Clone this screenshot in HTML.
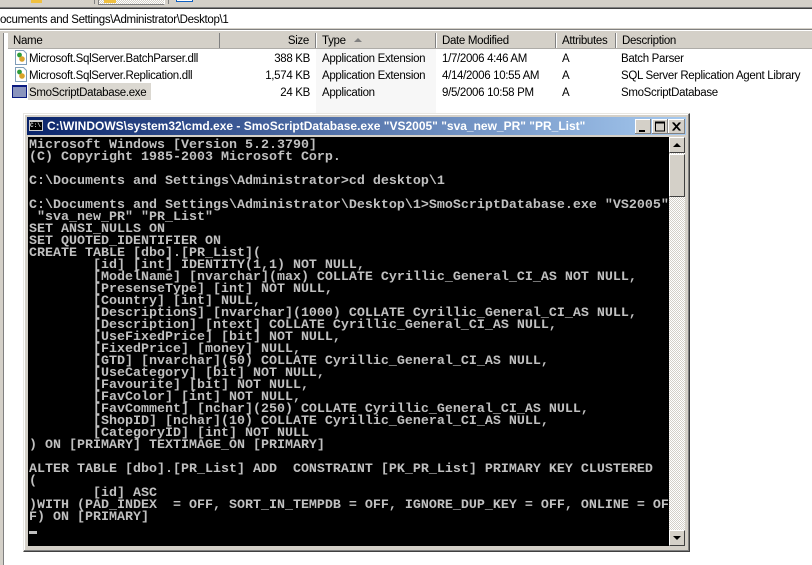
<!DOCTYPE html>
<html><head><meta charset="utf-8"><style>
html,body{margin:0;padding:0;background:#fff}
#r{position:relative;width:812px;height:565px;overflow:hidden;background:#fff;font-family:"Liberation Sans",sans-serif;font-size:11.5px;letter-spacing:-.32px;color:#000}
.a{position:absolute}
.t{position:absolute;white-space:pre;line-height:14px;height:14px}
.h{position:absolute;top:33px;height:15px;background:#d4d0c8;border-right:1px solid #808080;box-shadow:inset -1px 0 0 #d4d0c8,1px 0 0 #fff;line-height:17px;box-sizing:border-box;padding-left:5px;white-space:pre}
pre{position:absolute;left:29px;top:137px;padding-top:3px;margin:0;font:bold 13.33px/12px "Liberation Mono",monospace;letter-spacing:0;color:#c0c0c0;tab-size:8;width:640px;height:405px;overflow:hidden}
</style></head><body><div id="r">
<div class="a" style="left:0;top:0;width:812px;height:7px;background:#d4d0c8"></div>
<div class="a" style="left:31px;top:0;width:11px;height:3px;background:#f0c040"></div>
<div class="a" style="left:94px;top:0;width:1px;height:4px;background:#808080"></div>
<div class="a" style="left:98px;top:0;width:67px;height:5px;background:repeating-conic-gradient(#fff 0 25%,#d4d0c8 0 50%) 0 0/2px 2px;border-right:1px solid #fff;border-bottom:1px solid #808080;border-left:1px solid #808080;box-sizing:border-box"></div>
<div class="a" style="left:104px;top:0;width:12px;height:3px;background:#f0c040"></div>
<div class="a" style="left:168px;top:0;width:1px;height:4px;background:#808080"></div>
<div class="a" style="left:176px;top:0;width:15px;height:1px;background:#fff;border:1px solid #1060c0;border-top:0;box-sizing:content-box"></div>
<div class="a" style="left:0;top:7px;width:812px;height:1px;background:#808080"></div>
<div class="a" style="left:0;top:8px;width:812px;height:1px;background:#404040"></div>
<div class="a" style="left:0;top:28px;width:812px;height:1px;background:#d4d0c8"></div>
<div class="a" style="left:0;top:29px;width:812px;height:1px;background:#808080"></div>
<div class="a" style="left:0;top:30px;width:812px;height:1px;background:#fff"></div>
<div class="a" style="left:0;top:31px;width:812px;height:2px;background:#d4d0c8"></div>
<div class="t" style="left:-8px;top:13px">Documents and Settings\Administrator\Desktop\1</div>
<div class="a" style="left:0;top:33px;width:3px;height:532px;background:#d4d0c8"></div>
<div class="a" style="left:3px;top:33px;width:5px;height:532px;background:#fff;border-left:1px solid #808080;box-sizing:border-box"></div>

<div class="a" style="left:8px;top:33px;width:804px;height:16px;background:#d4d0c8"></div>
<div class="h" style="left:9px;width:211px;padding-left:4px">Name</div>
<div class="h" style="left:220px;width:96px;text-align:right;padding:0 6px 0 0">Size</div>
<div class="h" style="left:317px;width:119px">Type</div>
<div class="a" style="left:354px;top:38px;width:0;height:0;border:4px solid transparent;border-top:0;border-bottom:4px solid #808080"></div>
<div class="h" style="left:437px;width:119px">Date Modified</div>
<div class="h" style="left:557px;width:59px">Attributes</div>
<div class="h" style="left:617px;width:195px;border-right:0">Description</div>
<div class="a" style="left:8px;top:48px;width:804px;height:1px;background:#808080;opacity:.45"></div>

<div class="a" style="left:316px;top:49px;width:120px;height:65px;background:#f7f7f7"></div>

<svg class="a" style="left:14px;top:50px" width="14" height="32" viewBox="0 0 14 32">
<path d="M1.5.5h8l3 3v11h-11z" fill="#fff" stroke="#7f9db9"/><circle cx="5.5" cy="5" r="2.4" fill="#2f9d3a"/><circle cx="8" cy="9" r="2.8" fill="#d9a32a"/>
<path d="M1.5 17.5h8l3 3v11h-11z" fill="#fff" stroke="#7f9db9"/><circle cx="5.5" cy="22" r="2.4" fill="#2f9d3a"/><circle cx="8" cy="26" r="2.8" fill="#d9a32a"/>
</svg>
<div class="a" style="left:12px;top:85px;width:15px;height:13px;background:#8a94bd;border:1px solid #0a1a80;box-sizing:border-box;box-shadow:inset 0 1px 0 #0a1a80"></div>
<div class="a" style="left:28px;top:83px;width:123px;height:17px;background:#dbd8d1"></div>

<div class="t" style="left:29px;top:52px">Microsoft.SqlServer.BatchParser.dll</div>
<div class="t" style="left:29px;top:69px">Microsoft.SqlServer.Replication.dll</div>
<div class="t" style="left:29px;top:86px">SmoScriptDatabase.exe</div>
<div class="t" style="left:210px;width:100px;text-align:right;top:52px">388 KB</div>
<div class="t" style="left:210px;width:100px;text-align:right;top:69px">1,574 KB</div>
<div class="t" style="left:210px;width:100px;text-align:right;top:86px">24 KB</div>
<div class="t" style="left:322px;top:52px">Application Extension</div>
<div class="t" style="left:322px;top:69px">Application Extension</div>
<div class="t" style="left:322px;top:86px">Application</div>
<div class="t" style="left:442px;top:52px">1/7/2006 4:46 AM</div>
<div class="t" style="left:442px;top:69px">4/14/2006 10:55 AM</div>
<div class="t" style="left:442px;top:86px">9/5/2006 10:58 PM</div>
<div class="t" style="left:562px;top:52px">A</div>
<div class="t" style="left:562px;top:69px">A</div>
<div class="t" style="left:562px;top:86px">A</div>
<div class="t" style="left:621px;top:52px">Batch Parser</div>
<div class="t" style="left:621px;top:69px">SQL Server Replication Agent Library</div>
<div class="t" style="left:621px;top:86px">SmoScriptDatabase</div>

<div class="a" style="left:23px;top:113px;width:667px;height:439px;background:#d4d0c8;border:1px solid;border-color:#e8e6e1 #404040 #404040 #e8e6e1;box-sizing:border-box;box-shadow:inset -1px -1px 0 #808080,inset 1px 1px 0 #fff"></div>
<div class="a" style="left:27px;top:117px;width:659px;height:18px;background:linear-gradient(90deg,#0a246a,#a6caf0)"></div>
<div class="a" style="left:29px;top:120px;width:14px;height:11px;background:#000;border:1px solid #ccc;border-top-width:2px;box-sizing:border-box;overflow:hidden;color:#ddd;font:bold 6px/8px 'Liberation Mono',monospace;letter-spacing:0">C:\</div>
<div class="t" style="left:47px;top:118px;font:bold 12px/16px 'Liberation Sans',sans-serif;letter-spacing:0;height:16px;color:#fff">C:\WINDOWS\system32\cmd.exe - SmoScriptDatabase.exe "VS2005" "sva_new_PR" "PR_List"</div>
<svg class="a" style="left:635px;top:119px" width="50" height="15" viewBox="0 0 50 15">
<g fill="#d4d0c8" stroke="#808080"><rect x=".5" y=".5" width="15" height="14"/><rect x="17.5" y=".5" width="15" height="14"/><rect x="33.5" y=".5" width="16" height="14"/></g>
<path d="M.5 14V.5H15M17.5 14V.5H32M33.5 14V.5H49" fill="none" stroke="#fff"/>
<path d="M4 11h6v2H4z"/><path d="M20 2.5h10v10h-10zM21 4.5h8v7h-8z" fill-rule="evenodd"/>
<path d="M37.5 3.5l7 8M38.5 3.5l7 8M44.5 3.5l-7 8M45.5 3.5l-7 8" stroke="#000" fill="none"/>
</svg>
<div class="a" style="left:28px;top:137px;width:641px;height:409px;background:#000"></div>
<div class="a" style="left:669px;top:137px;width:16px;height:409px;background:repeating-conic-gradient(#fff 0 25%,#d4d0c8 0 50%) 0 0/2px 2px"></div>
<div class="a" style="left:669px;top:137px;width:16px;height:16px;background:#d4d0c8;box-sizing:border-box;border:1px solid;border-color:#fff #404040 #404040 #fff"></div>
<div class="a" style="left:673px;top:143px;width:0;height:0;border:4px solid transparent;border-top:0;border-bottom:4px solid #000"></div>
<div class="a" style="left:669px;top:154px;width:16px;height:43px;background:#d4d0c8;box-sizing:border-box;border:1px solid;border-color:#fff #404040 #404040 #fff"></div>
<div class="a" style="left:669px;top:530px;width:16px;height:16px;background:#d4d0c8;box-sizing:border-box;border:1px solid;border-color:#fff #404040 #404040 #fff"></div>
<div class="a" style="left:673px;top:536px;width:0;height:0;border:4px solid transparent;border-bottom:0;border-top:4px solid #000"></div>
<pre>Microsoft Windows [Version 5.2.3790]
(C) Copyright 1985-2003 Microsoft Corp.

C:\Documents and Settings\Administrator&gt;cd desktop\1

C:\Documents and Settings\Administrator\Desktop\1&gt;SmoScriptDatabase.exe "VS2005"
 "sva_new_PR" "PR_List"
SET ANSI_NULLS ON
SET QUOTED_IDENTIFIER ON
CREATE TABLE [dbo].[PR_List](
        [id] [int] IDENTITY(1,1) NOT NULL,
        [ModelName] [nvarchar](max) COLLATE Cyrillic_General_CI_AS NOT NULL,
        [PresenseType] [int] NOT NULL,
        [Country] [int] NULL,
        [DescriptionS] [nvarchar](1000) COLLATE Cyrillic_General_CI_AS NULL,
        [Description] [ntext] COLLATE Cyrillic_General_CI_AS NULL,
        [UseFixedPrice] [bit] NOT NULL,
        [FixedPrice] [money] NULL,
        [GTD] [nvarchar](50) COLLATE Cyrillic_General_CI_AS NULL,
        [UseCategory] [bit] NOT NULL,
        [Favourite] [bit] NOT NULL,
        [FavColor] [int] NOT NULL,
        [FavComment] [nchar](250) COLLATE Cyrillic_General_CI_AS NULL,
        [ShopID] [nchar](10) COLLATE Cyrillic_General_CI_AS NULL,
        [CategoryID] [int] NOT NULL
) ON [PRIMARY] TEXTIMAGE_ON [PRIMARY]

ALTER TABLE [dbo].[PR_List] ADD  CONSTRAINT [PK_PR_List] PRIMARY KEY CLUSTERED
(
        [id] ASC
)WITH (PAD_INDEX  = OFF, SORT_IN_TEMPDB = OFF, IGNORE_DUP_KEY = OFF, ONLINE = OF
F) ON [PRIMARY]
</pre>
<div class="a" style="left:29px;top:531px;width:8px;height:3px;background:#c0c0c0"></div>
</div></body></html>
